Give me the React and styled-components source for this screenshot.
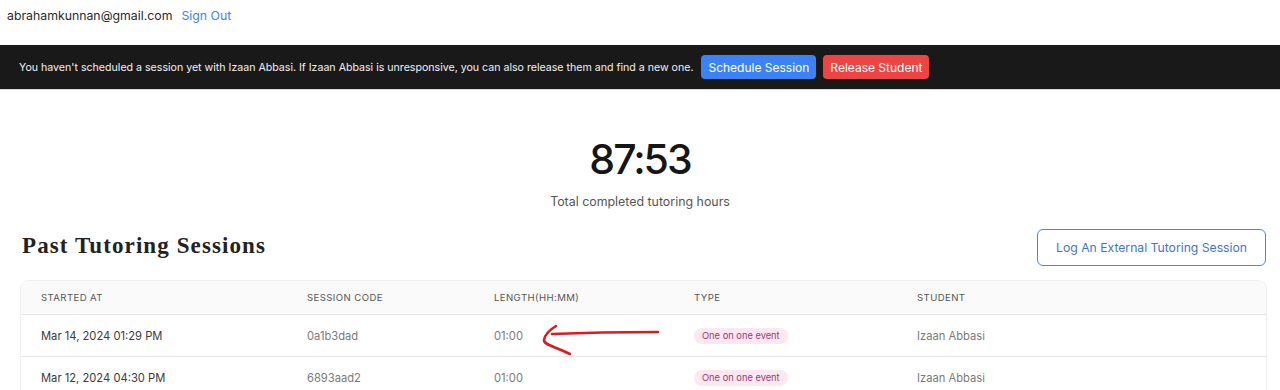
import React from "react";
import styled, { createGlobalStyle } from "styled-components";

const Global = createGlobalStyle`
  html, body { margin: 0; padding: 0; background: #fff; }
  body { font-family: Inter, "Open Sans", sans-serif; color: #1f1f1f; }
  * { box-sizing: border-box; }
`;

const Page = styled.div`
  position: relative;
  width: 1280px;
  overflow: hidden;
`;

const TopBar = styled.div`
  display: flex;
  align-items: center;
  gap: 9px;
  height: 33px;
  padding: 0 7px 2px;
  font-size: 12.3px;
`;

const Email = styled.span`
  color: #2a2a2a;
`;

const LinkBtn = styled.a`
  color: #3b82f6;
  cursor: pointer;
`;

const Banner = styled.div`
  margin-top: 12px;
  height: 45px;
  background: #19191a;
  border-bottom: 1px solid #dcdcdc;
  display: flex;
  align-items: center;
  padding: 0 19px;
  gap: 7px;
`;

const BannerText = styled.span`
  color: #f2f2f2;
  font-size: 10.62px;
  margin-right: 1px;
`;

const BannerButton = styled.button`
  border: none;
  border-radius: 4px;
  height: 24px;
  padding: 0 7px;
  font-family: inherit;
  font-size: 12px;
  color: #fff;
  background: ${(p) => (p.$variant === "danger" ? "#ef4444" : "#3b82f6")};
`;

const Stats = styled.div`
  display: flex;
  flex-direction: column;
  align-items: center;
  padding-top: 44px;
`;

const Total = styled.div`
  font-size: 41px;
  line-height: 50px;
  font-weight: 500;
  color: #161616;
  letter-spacing: -2px;
`;

const TotalLabel = styled.div`
  margin-top: 10px;
  font-size: 12.4px;
  color: #555;
`;

const SectionHeader = styled.div`
  display: flex;
  justify-content: space-between;
  align-items: center;
  padding: 20px 14px 0 22px;
`;

const Heading = styled.h2`
  margin: 0 0 4px;
  font-family: "Liberation Serif", "DejaVu Serif", serif;
  font-weight: 700;
  font-size: 23px;
  letter-spacing: 1.1px;
  color: #222;
`;

const OutlineButton = styled.button`
  height: 37px;
  padding: 0 18px;
  border: 1px solid #4a84ee;
  border-radius: 6px;
  background: #fff;
  color: #3e74dc;
  font-family: inherit;
  font-size: 12.2px;
`;

const TableWrap = styled.div`
  margin: 15px 14px 0 21px;
  border-radius: 8px;
  box-shadow: 0 0 0 1px #efefef, 0 1px 3px rgba(0, 0, 0, 0.05);
  overflow: hidden;
`;

const Row = styled.div`
  display: grid;
  grid-template-columns: 266px 187px 200px 223px 1fr;
  align-items: center;
  height: ${(p) => (p.$head ? "33px" : "42px")};
  padding-left: 20px;
  background: ${(p) => (p.$head ? "#fafafa" : "#fff")};
  border-top: ${(p) => (p.$head ? "none" : "1px solid #e6e6e6")};
`;

const HeadCell = styled.div`
  font-size: 9.6px;
  color: #555;
  letter-spacing: 0.4px;
  text-transform: uppercase;
`;

const Cell = styled.div`
  font-size: 11.2px;
  color: ${(p) => (p.$dark ? "#3a3a3a" : "#7a7a7a")};
`;

const Badge = styled.span`
  display: inline-block;
  background: #fce7f3;
  color: #9d3a6a;
  font-size: 9.3px;
  line-height: 16px;
  padding: 0 8px;
  border-radius: 999px;
`;

const Arrow = styled.svg`
  position: absolute;
  left: 530px;
  top: 315px;
  pointer-events: none;
`;

const sessions = [
  { start: "Mar 14, 2024 01:29 PM", code: "0a1b3dad", len: "01:00", type: "One on one event", student: "Izaan Abbasi" },
  { start: "Mar 12, 2024 04:30 PM", code: "6893aad2", len: "01:00", type: "One on one event", student: "Izaan Abbasi" },
];

export default function App() {
  return (
    <Page>
      <Global />
      <TopBar>
        <Email>abrahamkunnan@gmail.com</Email>
        <LinkBtn>Sign Out</LinkBtn>
      </TopBar>
      <Banner>
        <BannerText>
          You haven't scheduled a session yet with Izaan Abbasi. If Izaan Abbasi is unresponsive, you can also release them and find a new one.
        </BannerText>
        <BannerButton>Schedule Session</BannerButton>
        <BannerButton $variant="danger">Release Student</BannerButton>
      </Banner>
      <Stats>
        <Total>87:53</Total>
        <TotalLabel>Total completed tutoring hours</TotalLabel>
      </Stats>
      <SectionHeader>
        <Heading>Past Tutoring Sessions</Heading>
        <OutlineButton>Log An External Tutoring Session</OutlineButton>
      </SectionHeader>
      <TableWrap>
        <Row $head>
          <HeadCell>Started At</HeadCell>
          <HeadCell>Session Code</HeadCell>
          <HeadCell>Length(HH:MM)</HeadCell>
          <HeadCell>Type</HeadCell>
          <HeadCell>Student</HeadCell>
        </Row>
        {sessions.map((s) => (
          <Row key={s.code}>
            <Cell $dark>{s.start}</Cell>
            <Cell>{s.code}</Cell>
            <Cell>{s.len}</Cell>
            <Cell>
              <Badge>{s.type}</Badge>
            </Cell>
            <Cell>{s.student}</Cell>
          </Row>
        ))}
      </TableWrap>
      <Arrow width="140" height="45" viewBox="0 0 140 45">
        <path
          d="M128 17 C100 17 70 17 22 19 M26 11 C21 14 15 19 14 25 C14 30 24 31 40 39"
          fill="none"
          stroke="#e0191f"
          strokeWidth="2.6"
          strokeLinecap="round"
          strokeLinejoin="round"
        />
      </Arrow>
    </Page>
  );
}
